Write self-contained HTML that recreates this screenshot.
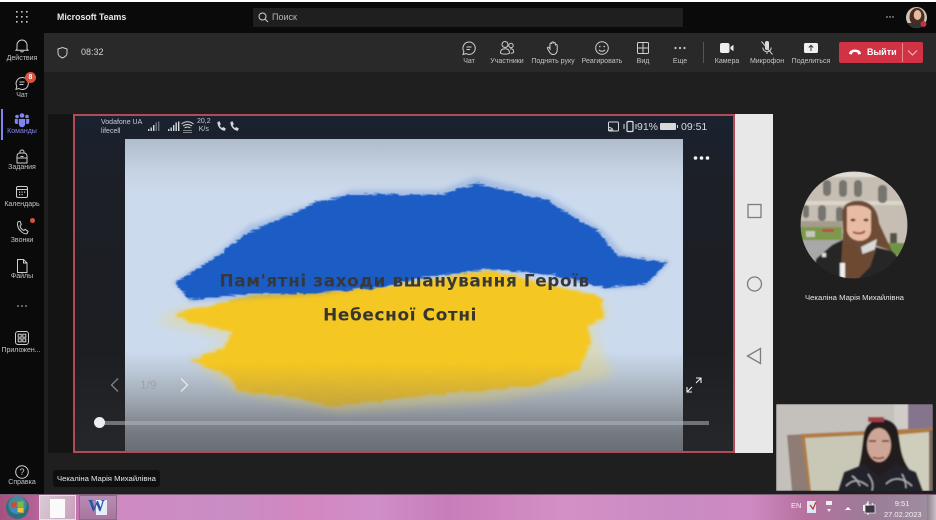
<!DOCTYPE html>
<html><head><meta charset="utf-8"><style>
html,body{margin:0;padding:0;background:#1f1f1f}
#p{position:relative;width:936px;height:520px;overflow:hidden;background:#1f1f1f;font-family:"Liberation Sans","DejaVu Sans",sans-serif;color:#ddd;filter:blur(.35px)}
#p div,#p svg{position:absolute}
.l{font-size:7px;color:#c4c4c4;text-align:center;white-space:nowrap;transform:translateX(-50%);line-height:8px}
.i{fill:none;stroke:#cfcfcf;stroke-width:1}
</style></head><body><div id="p">
<div style="left:0;top:0;width:936px;height:2px;background:#fff"></div>
<div style="left:0;top:2px;width:936px;height:31px;background:#0a0a0a"></div>
<div style="left:0;top:33px;width:44px;height:461px;background:#0a0a0a"></div>
<div style="left:44px;top:33px;width:892px;height:39px;background:#292929"></div>
<div style="left:44px;top:72px;width:4px;height:422px;background:#1f1f1f"></div>
<div style="left:48px;top:114px;width:26px;height:339px;background:#141414"></div>

<!-- title bar -->
<svg style="left:15px;top:10px" width="14" height="14"><g fill="#ccc"><rect x="1" y="1" width="1.6" height="1.6"/><rect x="6" y="1" width="1.6" height="1.6"/><rect x="11" y="1" width="1.6" height="1.6"/><rect x="1" y="6" width="1.6" height="1.6"/><rect x="6" y="6" width="1.6" height="1.6"/><rect x="11" y="6" width="1.6" height="1.6"/><rect x="1" y="11" width="1.6" height="1.6"/><rect x="6" y="11" width="1.6" height="1.6"/><rect x="11" y="11" width="1.6" height="1.6"/></g></svg>
<div style="left:57px;top:12px;font-size:8.800px;font-weight:bold;color:#e8e8e8;line-height:11px;white-space:nowrap">Microsoft Teams</div>
<div style="left:253px;top:8px;width:430px;height:19px;background:#1f1f1f"></div>
<svg style="left:258px;top:12px" width="11" height="11"><circle cx="4.5" cy="4.5" r="3.5" class="i"/><path d="M7 7l3 3" class="i"/></svg>
<div style="left:272px;top:12px;font-size:9px;color:#b5b5b5;line-height:11px">Поиск</div>
<svg style="left:886px;top:15px" width="9" height="4" fill="#ddd"><circle cx="1" cy="2" r=".7"/><circle cx="4" cy="2" r=".7"/><circle cx="7" cy="2" r=".7"/></svg>
<svg style="left:905px;top:6px" width="23" height="23"><defs><clipPath id="av"><circle cx="11.500" cy="11.500" r="10.500"/></clipPath></defs><g clip-path="url(#av)"><rect width="23" height="23" fill="#cfc5b6"/><ellipse cx="12" cy="11" rx="7.500" ry="9" fill="#4a2c20"/><ellipse cx="12.500" cy="9" rx="3.800" ry="5" fill="#e6bba5"/><rect x="3" y="17" width="18" height="7" fill="#2f3432"/></g><circle cx="18.500" cy="18" r="3" fill="#c4314b"/></svg>

<!-- rail -->
<div style="left:1px;top:109px;width:2px;height:31px;background:#7f85f5"></div>
<svg style="left:14px;top:38px" width="16" height="16"><path d="M3 11V7a5 5 0 0 1 10 0v4l1 1.2H2zM6.500 13a1.600 1.600 0 0 0 3 0" class="i"/></svg>
<div class="l" style="left:22px;top:55px">Действия</div>
<svg style="left:14px;top:75px" width="16" height="16"><path d="M8 2.500a6 6 0 1 1-3 11L2 14.300l.8-3A6 6 0 0 1 8 2.500zM5.500 7h5M5.500 9.500h4" class="i"/></svg>
<div style="left:25px;top:72px;width:11px;height:11px;border-radius:6px;background:#d9523f;font-size:7px;font-weight:bold;color:#fff;text-align:center;line-height:11px">8</div>
<div class="l" style="left:22px;top:92px">Чат</div>
<svg style="left:14px;top:112px" width="16" height="16" fill="#7f85f5"><circle cx="8" cy="3.500" r="2.300"/><circle cx="3" cy="4.500" r="1.800"/><circle cx="13" cy="4.500" r="1.800"/><path d="M4.800 7h6.400v5a3.200 3.200 0 0 1-6.400 0zM.8 7h3v5H2.500A1.700 1.700 0 0 1 .8 10.300zM12.200 7h3v3.300a1.700 1.700 0 0 1-1.700 1.700h-1.300z"/></svg>
<div class="l" style="left:22px;top:128px;color:#7f85f5">Команды</div>
<svg style="left:14px;top:149px" width="16" height="16"><path d="M6 4V3a2 2 0 0 1 4 0v1M3 7a3 3 0 0 1 3-3h4a3 3 0 0 1 3 3v7H3zM3 9h10M6.500 7.500h3" class="i"/></svg>
<div class="l" style="left:22px;top:164px">Задания</div>
<svg style="left:14px;top:184px" width="16" height="16"><rect x="2.500" y="2.500" width="11" height="11" rx="1.500" class="i"/><path d="M2.500 5.500h11" class="i"/><g fill="#ccc"><rect x="5" y="7.500" width="1.200" height="1.200"/><rect x="7.500" y="7.500" width="1.200" height="1.200"/><rect x="10" y="7.500" width="1.200" height="1.200"/><rect x="5" y="10" width="1.200" height="1.200"/><rect x="7.500" y="10" width="1.200" height="1.200"/></g></svg>
<div class="l" style="left:22px;top:201px">Календарь</div>
<svg style="left:14px;top:220px" width="16" height="16"><path d="M4 1.800l2-.5 1.300 3.200-1.300 1.400c.4 2 1.800 3.700 3.700 4.500l1.500-1 2.800 1.900-.9 2.300c-2 .7-4.700-.5-6.700-2.900C4 8.800 2.800 4.300 4 1.800z" class="i"/></svg>
<div style="left:30px;top:218px;width:5px;height:5px;border-radius:3px;background:#d9523f"></div>
<div class="l" style="left:22px;top:237px">Звонки</div>
<svg style="left:14px;top:258px" width="16" height="16"><path d="M3.500 1.500h6l3.500 3.500v9.500h-9.500zM9.500 1.500v3.500H13" class="i"/></svg>
<div class="l" style="left:22px;top:273px">Файлы</div>
<svg style="left:16px;top:304px" width="12" height="4" fill="#ccc"><circle cx="2" cy="2" r=".8"/><circle cx="6" cy="2" r=".8"/><circle cx="10" cy="2" r=".8"/></svg>
<svg style="left:14px;top:330px" width="16" height="16"><rect x="1.500" y="1.500" width="13" height="13" rx="2.500" class="i"/><g class="i"><rect x="4.200" y="4.200" width="3" height="3"/><rect x="8.800" y="4.200" width="3" height="3"/><rect x="4.200" y="8.800" width="3" height="3"/><rect x="8.800" y="8.800" width="3" height="3"/></g></svg>
<div class="l" style="left:21px;top:347px">Приложен...</div>
<svg style="left:14px;top:464px" width="16" height="16"><circle cx="8" cy="8" r="6.300" class="i"/><text x="8" y="11" font-size="9" fill="#ccc" text-anchor="middle" font-family="Liberation Sans">?</text></svg>
<div class="l" style="left:22px;top:479px">Справка</div>

<!-- toolbar -->
<svg style="left:56px;top:46px" width="13" height="13"><path d="M6.500 1.500l4.500 1.500v4c0 2.500-2 4-4.500 5C4 11 2 9.500 2 7V3z" class="i"/></svg>
<div style="left:81px;top:47px;font-size:9px;color:#d0d0d0;line-height:11px">08:32</div>

<svg style="left:461px;top:40px" width="16" height="16"><path d="M8 2a6.200 6.200 0 1 1-3 11.600L2 14.500l.9-3A6.200 6.200 0 0 1 8 2zM5.500 7h5M5.500 9.500h3.500" class="i"/></svg>
<div class="l" style="left:469px;top:58px">Чат</div>
<svg style="left:499px;top:40px" width="16" height="16"><circle cx="6" cy="4.500" r="3" class="i"/><circle cx="12" cy="5.500" r="2.200" class="i"/><path d="M1.500 13c0-2.500 1.500-4.200 4.500-4.200s4.500 1.700 4.500 4.200c-1 1.500-8 1.500-9 0zM11 8.800c2 0 3.700.8 3.700 3 0 1-1.500 1.500-3 1.500" class="i"/></svg>
<div class="l" style="left:507px;top:58px">Участники</div>
<svg style="left:545px;top:40px" width="16" height="16"><path d="M5 9V4a.9.900 0 0 1 1.800 0V2.800a.9.900 0 0 1 1.800 0V3.500a.9.900 0 0 1 1.800 0V5.500a.9.900 0 0 1 1.800 0V10c0 2.500-1.500 4.500-4 4.500-2 0-3-1-4-3L2.500 8.500c-.5-1 .8-1.800 1.500-1z" class="i"/></svg>
<div class="l" style="left:553px;top:58px">Поднять руку</div>
<svg style="left:594px;top:40px" width="16" height="16"><circle cx="8" cy="8" r="6.300" class="i"/><circle cx="5.800" cy="6.500" r=".8" fill="#ccc"/><circle cx="10.200" cy="6.500" r=".8" fill="#ccc"/><path d="M5 9.800c1.500 2 4.500 2 6 0" class="i"/></svg>
<div class="l" style="left:602px;top:58px">Реагировать</div>
<svg style="left:635px;top:40px" width="16" height="16"><rect x="2.500" y="2.500" width="11" height="11" rx="1" class="i"/><path d="M8 2.500v11M2.500 8h11" class="i"/></svg>
<div class="l" style="left:643px;top:58px">Вид</div>
<svg style="left:672px;top:40px" width="16" height="16" fill="#ccc"><circle cx="3.500" cy="8" r="1.100"/><circle cx="8" cy="8" r="1.100"/><circle cx="12.500" cy="8" r="1.100"/></svg>
<div class="l" style="left:680px;top:58px">Еще</div>
<div style="left:703px;top:42px;width:1px;height:21px;background:#555"></div>
<svg style="left:719px;top:40px" width="16" height="16" fill="#eee"><rect x="1" y="3" width="9.500" height="10" rx="2"/><path d="M11.500 7l3-2.200v6.400l-3-2.200z"/></svg>
<div class="l" style="left:727px;top:58px">Камера</div>
<svg style="left:759px;top:40px" width="16" height="16"><path d="M6 3a2 2 0 0 1 4 0v5a2 2 0 0 1-4 0z" fill="#ddd"/><path d="M3.800 7.500a4.200 4.200 0 0 0 8.400 0M8 12v2M2.500 1.500l11 13" class="i"/></svg>
<div class="l" style="left:767px;top:58px">Микрофон</div>
<svg style="left:803px;top:40px" width="16" height="16"><rect x="1" y="3" width="14" height="10" rx="1.500" fill="#f0f0f0"/><path d="M8 11V5.500M5.800 7.500L8 5.300l2.200 2.200" fill="none" stroke="#333" stroke-width="1"/></svg>
<div class="l" style="left:811px;top:58px">Поделиться</div>
<div style="left:839px;top:42px;width:84px;height:21px;background:#d13344;border-radius:2px"></div>
<div style="left:902px;top:43px;width:1px;height:19px;background:#e88a92"></div>
<svg style="left:848px;top:47px" width="14" height="10"><path d="M1 7c0-3 3-4.500 6-4.500S13 4 13 7l-3 .5-.5-2c-1.500-.6-3.500-.6-5 0L4 7.500z" fill="#fff"/></svg>
<div style="left:867px;top:47px;font-size:9px;font-weight:bold;color:#fff;line-height:11px">Выйти</div>
<svg style="left:907px;top:49px" width="11" height="8"><path d="M1 1.500l4.500 4.500L10 1.500" fill="none" stroke="#f2c0c4"/></svg>

<!-- share -->
<div style="left:73px;top:114px;width:662px;height:339px;box-sizing:border-box;border:2px solid #b44a58;background:#1c2027"></div>
<div style="left:75px;top:116px;width:658px;height:335px;background:linear-gradient(#1a2230,#1c1f26 20%,#1c1e22 70%,#26272a)"></div>
<div style="left:125px;top:139px;width:558px;height:312px;background:linear-gradient(#aebccb 0,#c4d2e2 10%,#ccdaed 18%,#cbdaed 68%,#bcc9d8 74%,#9ea6b0 84%,#767b82 94%,#6a6e74 100%)"></div>
<svg style="left:150px;top:160px" width="530" height="260" viewBox="0 0 1568 770">
<defs>
<filter id="r" x="-5%" y="-10%" width="110%" height="120%"><feTurbulence type="fractalNoise" baseFrequency=".03 .25" numOctaves="3" seed="4"/><feDisplacementMap in="SourceGraphic" scale="20" xChannelSelector="R" yChannelSelector="G"/><feGaussianBlur stdDeviation="1.500"/></filter>
<filter id="rs" x="-5%" y="-10%" width="110%" height="120%"><feGaussianBlur stdDeviation="7"/></filter>
<filter id="y" x="-5%" y="-10%" width="110%" height="120%"><feTurbulence type="fractalNoise" baseFrequency=".02 .18" numOctaves="3" seed="9"/><feDisplacementMap in="SourceGraphic" scale="24" xChannelSelector="R" yChannelSelector="G"/><feGaussianBlur stdDeviation="4"/></filter>
<filter id="ys" x="-5%" y="-10%" width="110%" height="120%"><feGaussianBlur stdDeviation="14"/></filter>
<linearGradient id="yg" x1="0" y1="0" x2="0" y2="1"><stop offset=".68" stop-color="#f5c722"/><stop offset="1" stop-color="#c4a53c"/></linearGradient>
</defs>
<path filter="url(#ys)" opacity=".32" fill="#f3d65a" d="M15 480L90 440 1350 420 1350 475 1310 500 1370 640 1260 670 1000 715 560 745 260 690 125 595 240 530z"/>
<path filter="url(#y)" fill="url(#yg)" d="M70 455L300 400 700 375 1000 325 1335 405 1345 465 1295 490 1305 540 1270 620 1130 670 960 685 800 700 540 730 400 700 260 685 235 640 125 595 220 555 240 510 120 480z"/>
<path filter="url(#rs)" opacity=".22" fill="#2a66c8" d="M68 362L205 270 290 195 420 150 600 88 860 88 965 50 1180 105 1340 205 1400 275 1540 300 1470 375 1350 382 1190 345 1000 325 500 400 120 420z"/>
<path filter="url(#r)" fill="#1a5cc5" d="M75 362L210 278 240 250 300 210 420 160 490 125 600 102 865 102 965 70 1170 118 1325 210 1385 285 1535 303 1465 370 1350 377 1190 340 1000 322 800 350 700 375 480 395 300 395 115 415z"/>
<text x="205" y="375" font-family="DejaVu Sans" font-weight="bold" font-size="50" fill="#36383c" textLength="1095" lengthAdjust="spacing">Пам'ятні заходи вшанування Героїв</text>
<text x="512" y="475" font-family="DejaVu Sans" font-weight="bold" font-size="50" fill="#36362e" textLength="454" lengthAdjust="spacing">Небесної Сотні</text>
</svg>

<!-- status bar -->
<div style="left:101px;top:118px;font-size:7px;color:#c8ccd2;line-height:9px;white-space:nowrap">Vodafone UA<br>lifecell</div>
<svg style="left:146px;top:118px" width="94" height="18" fill="#d8d8d8"><path d="M2 13h1.400v-2H2zM4.500 13h1.400V9.500H4.500zM7 13h1.400V7H7z"/><path d="M9.500 13h1.400V4.500H9.500zM12 13h1.400V3.500H12z" opacity=".45"/><path d="M22 13h1.400v-2H22zM24.500 13h1.400V9.500h-1.400zM27 13h1.400V7H27zM29.500 13h1.400V4.500h-1.400zM32 13h1.400V3.500H32z"/><path d="M35.500 6c3.500-3 8.500-3 12 0M37 8c2.700-2 6.300-2 9 0M38.500 10c1.800-1.200 4.200-1.200 6 0" fill="none" stroke="#d8d8d8"/><path d="M37 12h9v.8h-9zM37 14h9v.8h-9z" opacity=".7"/><path d="M71.500 4l2-.7 1.300 3-1.100 1.200c.5 1.100 1.200 1.900 2.400 2.500l1.200-1 2.500 1.500-.9 2.200c-3.800.3-7.800-4.500-7.400-8.700zM84.500 4l2-.7 1.300 3-1.100 1.200c.5 1.100 1.200 1.900 2.400 2.500l1.200-1 2.500 1.500-.9 2.200c-3.800.3-7.800-4.500-7.400-8.700z"/></svg>
<div style="left:197px;top:118px;font-size:7px;color:#c8ccd2;line-height:8px;text-align:center">20,2<br>K/s</div>
<svg style="left:607px;top:120px" width="30" height="14"><rect x="1.500" y="2" width="10" height="9" rx="1" fill="none" stroke="#d8d8d8"/><path d="M2 10h3M2 7.500c2 0 4 1.500 4 3" fill="none" stroke="#d8d8d8"/><rect x="20" y="1.500" width="6" height="10" rx="1" fill="none" stroke="#e0e0e0" stroke-width="1.200"/><path d="M17 4v5M29 4v5" stroke="#d8d8d8"/></svg>
<div style="left:637px;top:121px;font-size:10.500px;color:#d8dadd;line-height:12px">91%</div>
<div style="left:660px;top:123px;width:16px;height:7px;background:#d8d8d8;border-radius:1px"></div>
<div style="left:677px;top:125px;width:1px;height:3px;background:#d8d8d8"></div>
<div style="left:681px;top:121px;font-size:10.500px;color:#d8dadd;line-height:12px">09:51</div>

<!-- overlay controls -->
<svg style="left:693px;top:155px" width="18" height="6" fill="#f4f4f4"><circle cx="2.500" cy="3" r="1.800"/><circle cx="8.500" cy="3" r="1.800"/><circle cx="14.500" cy="3" r="1.800"/></svg>
<svg style="left:108px;top:377px" width="12" height="16"><path d="M10 1.500L3.500 8l6.500 6.500" fill="none" stroke="#7f8387" stroke-width="1.300"/></svg>
<div style="left:140px;top:378px;font-size:12px;color:#9aa2ad;line-height:14px">1/9</div>
<svg style="left:179px;top:377px" width="12" height="16"><path d="M2 1.500L8.500 8 2 14.500" fill="none" stroke="#e6e8ea" stroke-width="1.300"/></svg>
<svg style="left:685px;top:376px" width="18" height="18"><path d="M2 16l5-5M2 11v5h5M16 2l-5 5M16 7V2h-5" fill="none" stroke="#f0f0f0" stroke-width="1.100"/></svg>
<div style="left:99px;top:421px;width:610px;height:4px;background:rgba(175,180,186,.55)"></div>
<div style="left:94px;top:417px;width:11px;height:11px;border-radius:6px;background:#eceef2"></div>

<!-- android nav -->
<div style="left:735px;top:114px;width:38px;height:339px;background:#e8e8e8"></div>
<svg style="left:735px;top:114px" width="38" height="339"><rect x="13" y="90.500" width="13" height="13" fill="none" stroke="#7c7c7c" stroke-width="1.300"/><circle cx="19.500" cy="170" r="7" fill="none" stroke="#7c7c7c" stroke-width="1.300"/><path d="M25.500 234.500v15l-13-7.500z" fill="none" stroke="#7c7c7c" stroke-width="1.300"/></svg>

<!-- participant -->
<svg style="left:800px;top:171px" width="108" height="108" viewBox="0 0 108 108">
<defs><clipPath id="c"><circle cx="54" cy="54" r="53.500"/></clipPath><filter id="b1"><feGaussianBlur stdDeviation=".9"/></filter></defs>
<g clip-path="url(#c)"><g filter="url(#b1)">
<rect width="108" height="108" fill="#c6beb2"/>
<rect width="108" height="6" fill="#e0dcd5"/>
<rect x="0" y="30" width="108" height="4" fill="#dcd6ca"/>
<g fill="#77746f"><rect x="23" y="9" width="8" height="16" rx="4"/><rect x="39" y="9" width="8" height="17" rx="4"/><rect x="54" y="9" width="8" height="17" rx="4"/><rect x="78" y="14" width="9" height="18" rx="4"/><rect x="3" y="34" width="6" height="13" rx="3"/><rect x="18" y="34" width="8" height="16" rx="4"/><rect x="36" y="36" width="7" height="15" rx="3"/><rect x="90" y="62" width="7" height="11" fill="#55514c"/></g>
<rect x="0" y="50" width="42" height="6" fill="#a59c8c"/>
<rect x="0" y="56" width="42" height="13" fill="#7b9a4a"/><rect x="6" y="60" width="9" height="6" fill="#c9c6c0"/><rect x="22" y="58" width="12" height="3" fill="#b05050"/>
<rect x="0" y="69" width="40" height="39" fill="#a8a8a8"/>
<rect x="88" y="72" width="20" height="12" fill="#6f9446"/>
<path d="M12 108L16 88 32 74 44 68 92 80 104 92V108z" fill="#262626"/>
<path d="M41 100L43 60C42 40 40 33 54 30 70 28 78 38 79 52L92 80 74 74 70 92 50 108z" fill="#6e4c36"/>
<path d="M47 36C52 34 66 33 71 40V60C70 73 50 73 47 60z" fill="#e8bba3"/>
<path d="M61 76L77 68 74 82 64 90z" fill="#d8d8d8"/>
<path d="M44 74L54 72 60 84 76 78 70 96 58 108 42 108z" fill="#6d4a33"/>
<rect x="40" y="92" width="5" height="16" fill="#eee"/>
<rect x="22" y="82" width="4" height="4" fill="#ddd"/>
<path d="M53 61c4 2 9 2 12-1" stroke="#a34a44" stroke-width="2" fill="none"/>
<ellipse cx="53" cy="49" rx="2.500" ry="1.200" fill="#3b2a22"/><ellipse cx="66" cy="49" rx="2.500" ry="1.200" fill="#3b2a22"/>
</g></g></svg>
<div style="left:854.500px;top:293px;font-size:7.700px;color:#e6e6e6;white-space:nowrap;transform:translateX(-50%);line-height:10px">Чекаліна Марія Михайлівна</div>

<!-- self view -->
<svg style="left:776px;top:404px" width="157" height="87" viewBox="0 0 157 87">
<defs><filter id="b2"><feGaussianBlur stdDeviation=".8"/></filter></defs>
<g filter="url(#b2)">
<rect width="157" height="87" fill="#c4c0bc"/>
<rect x="132" y="0" width="25" height="25" fill="#85758c"/>
<rect x="118" y="0" width="14" height="25" fill="#d0ccc8"/>
<path d="M11 31L157 24V87H16z" fill="#8e7c74"/>
<path d="M25 30L157 24V87H33z" fill="#b17b3f"/>
<path d="M29 34L110 30V87H35z" fill="#c9c8b6"/>
<path d="M118 31L153 28V87H118z" fill="#cfcdbb"/>
<rect x="153" y="26" width="4" height="61" fill="#7d6a5f"/>
<path d="M78 74C88 55 85 34 90 24 97 12 115 12 121 24 125 38 123 52 134 66L124 80H90z" fill="#241a1c"/>
<ellipse cx="103" cy="41" rx="12" ry="17" fill="#cfa696"/>
<path d="M97 53c3 2 8 2 11 0" stroke="#8a3b3b" stroke-width="1.600" fill="none"/>
<path d="M93 37h7M106 37h7" stroke="#4a3a38" stroke-width="1.400"/>
<path d="M62 87L68 68 88 60 103 72 120 60 140 68 147 87z" fill="#20222c"/>
<path d="M70 82c8-8 14-6 22 0M110 80c8-8 18-6 26 2M92 70c4 6 6 10 4 17M76 72c4 2 6 6 8 10M126 70c2 4 4 8 4 14" stroke="#c9c9d2" stroke-width="1" fill="none"/>
<rect x="92" y="13" width="16" height="5" fill="#9f3a46"/>
</g></svg>

<div style="left:53px;top:470px;width:107px;height:17px;background:#0f0f0f;border-radius:3px"></div>
<div style="left:57px;top:474px;font-size:7.700px;color:#e8e8e8;white-space:nowrap;line-height:10px">Чекаліна Марія Михайлівна</div>

<!-- taskbar -->
<div style="left:0;top:494px;width:936px;height:26px;background:linear-gradient(90deg,#a5527f 0,#bd6ba4 6%,#cf8ac3 13%,#c98dc4 25%,#d287c0 32%,#d08ec8 40%,#c77db9 48%,#d490c6 60%,#c98bc3 72%,#cf8ac2 80%,#b6719f 86%,#9b7c98 93%,#9f8fa0 100%);border-top:1px solid #7d5f78;box-sizing:border-box"></div>
<svg style="left:5px;top:495px" width="25" height="25"><circle cx="12.500" cy="12.500" r="11.500" fill="#2d6f7e"/><circle cx="12.500" cy="10" r="9" fill="#5fa7b5" opacity=".5"/><path d="M6 8l5.500-1v5l-5.500.5z" fill="#d9482b"/><path d="M12.500 6.800L18.500 6v6l-6 .5z" fill="#7ab94a"/><path d="M6 13.500l5.500-.5v5L6 17z" fill="#3e86cf"/><path d="M12.500 13l6-.5V18l-6-1z" fill="#f0c430"/></svg>
<div style="left:39px;top:495px;width:37px;height:25px;background:linear-gradient(110deg,#d9cbd6,#c9a0bb);box-sizing:border-box;border:1px solid #eadfe8"></div>
<div style="left:50px;top:499px;width:15px;height:19px;background:#fafafa"></div>
<div style="left:79px;top:495px;width:38px;height:25px;background:linear-gradient(#b98cb4,#a8769f);box-sizing:border-box;border:1px solid #8c6a8a"></div>
<div style="left:96px;top:500px;width:11px;height:15px;background:#e8eef8"></div>
<div style="left:88px;top:497px;font-size:17px;font-weight:bold;color:#2456a8;line-height:18px;font-family:'Liberation Serif',serif">W</div>
<div style="left:791px;top:501px;font-size:7.500px;color:#f4f0f4;line-height:10px">EN</div>
<svg style="left:805px;top:498px" width="80" height="20"><rect x="2" y="3" width="9" height="12" fill="#dfe7f3"/><path d="M5 7l3 4 3-7" stroke="#c83232" fill="none" stroke-width="1.300"/><rect x="21" y="3" width="6" height="4" fill="#eee"/><path d="M22 11h4l-2 3z" fill="#eee"/><path d="M40 12l3-3 3 3z" fill="#fff"/><path d="M58 7h2l3-3v12l-3-3h-2z" fill="#f2f2f2"/><path d="M65 7c1 2 1 4 0 6M67 5c2 3 2 7 0 10" stroke="#f2f2f2" fill="none"/></svg>
<svg style="left:862px;top:500px" width="16" height="16"><path d="M3 5h10v8H3z" fill="#3a3540" stroke="#eee" stroke-width=".8"/><path d="M6 1v5M6 13v2" stroke="#fff"/></svg>
<div style="left:884px;top:498px;width:36px;font-size:7.500px;color:#f4f0f4;line-height:11px;text-align:center;white-space:nowrap">9:51<br>27.02.2023</div>
<div style="left:927px;top:495px;width:9px;height:25px;background:linear-gradient(90deg,#8c808c,#c8c0c8)"></div>
</div></body></html>
